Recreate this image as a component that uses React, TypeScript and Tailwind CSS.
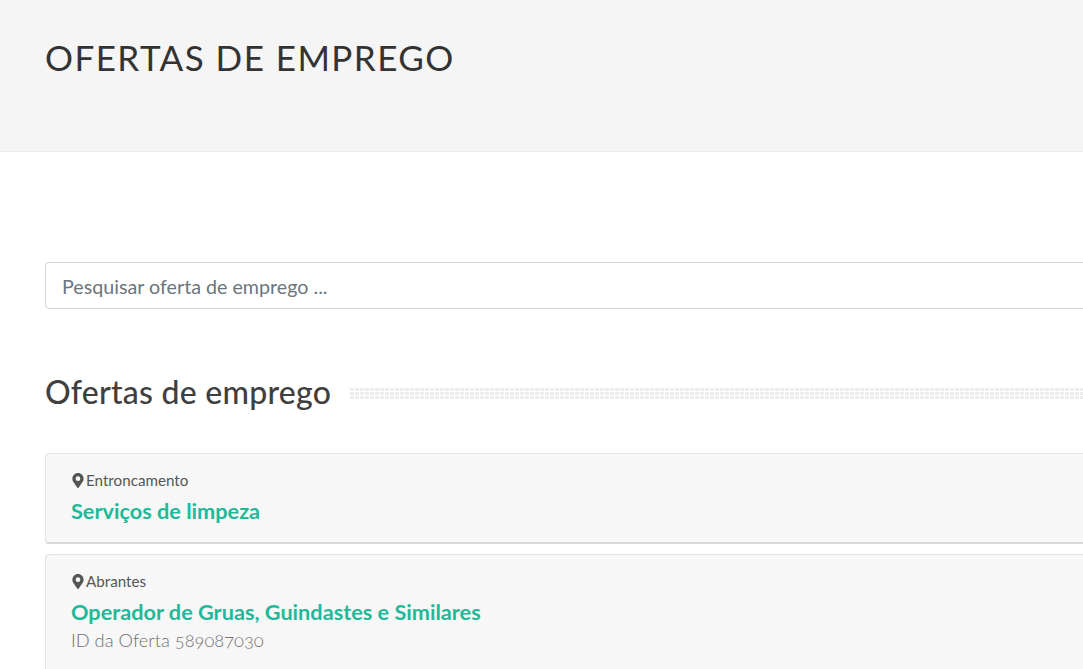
import React from 'react';

const raleway = "font-['Lato','Noto_Sans',sans-serif]";

const offers = [
  { city: 'Entroncamento', title: 'Serviços de limpeza' },
  { city: 'Abrantes', title: 'Operador de Gruas, Guindastes e Similares', ref: 'ID da Oferta 589087030' },
];

const Pin = () => (
  <svg viewBox="0 0 384 512" className="w-[12px] h-[15px] ml-[1px] mr-[2px] fill-[#555]">
    <path d="M172 502C27 291 0 269 0 192 0 86 86 0 192 0s192 86 192 192c0 77-27 99-172 310a24 24 0 0 1-40 0zm20-230a80 80 0 1 0 0-160 80 80 0 0 0 0 160z" />
  </svg>
);

export default function App() {
  return (
    <div className="h-[669px] overflow-hidden bg-white font-['Lato',sans-serif]">
      {/* Page title */}
      <div className="h-[152px] bg-[#f5f5f5] border-b border-[#ececec] pl-[45px] pt-[34px]">
        <h1 className={`${raleway} text-[35px] leading-[46px] font-normal text-[#333] tracking-[1.45px]`}>
          OFERTAS DE EMPREGO
        </h1>
      </div>

      <div className="w-[1300px] pl-[45px] pt-[110px]">
        <input
          type="text"
          placeholder="Pesquisar oferta de emprego ..."
          className="block w-full h-[47px] px-4 pt-[2px] text-[19.7px] text-[#6c757d] placeholder:text-[#6c757d] bg-white border border-[#ced4da] rounded-[4px]"
        />

        {/* Section heading */}
        <div className="flex items-center mt-[60px] h-[46px]">
          <h2 className={`${raleway} text-[32px] leading-[46px] font-medium text-[#3f3f3f] tracking-[0.25px] mr-[18px] whitespace-nowrap`}>
            Ofertas de emprego
          </h2>
          <div className="flex-1 h-[13px] mt-[3px] bg-[#ececec] bg-[length:5px_4px] bg-[linear-gradient(90deg,#ffffff_1px,transparent_1px),linear-gradient(#ffffff_1px,transparent_1px)]" />
        </div>

        {/* Offers */}
        <div className="mt-[38px] flex flex-col gap-[10px]">
          {offers.map((offer) => (
            <div
              key={offer.city}
              className="bg-[#f7f7f7] border border-[#e3e3e3] border-b-2 border-b-[#d9d9d9] rounded-[4px] pl-[25px] pt-[15px] pb-[17px]"
            >
              <div className="flex items-center h-[22px] text-[15.2px] text-[#555]">
                <Pin />
                {offer.city}
              </div>
              <a className={`${raleway} block mt-[6px] text-[21.7px] leading-[28px] font-bold text-[#1fb999]`}>{offer.title}</a>
              {offer.ref && <div className={`${raleway} oldstyle-nums mt-[1px] text-[18.3px] leading-[27px] font-light text-[#6f6f6f]`}>{offer.ref}</div>}
            </div>
          ))}
        </div>
      </div>
    </div>
  );
}
